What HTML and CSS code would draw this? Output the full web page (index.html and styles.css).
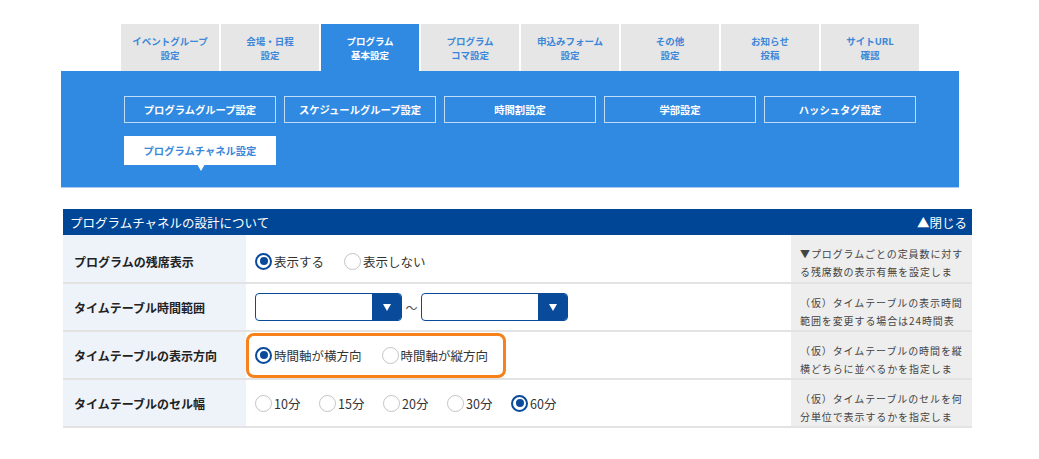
FILE: index.html
```html
<!DOCTYPE html>
<html lang="ja">
<head>
    <meta charset="UTF-8">
    <meta name="viewport" content="width=device-width, initial-scale=1.0">
    <title>プログラム基本設定</title>
    <link rel="stylesheet" href="styles.css">
</head>
<body>

    <div class="page">
        <ul class="tabs">
            <li class="tab">イベントグループ<br>設定</li>
            <li class="tab">会場・日程<br>設定</li>
            <li class="tab active">プログラム<br>基本設定</li>
            <li class="tab">プログラム<br>コマ設定</li>
            <li class="tab">申込みフォーム<br>設定</li>
            <li class="tab">その他<br>設定</li>
            <li class="tab">お知らせ<br>投稿</li>
            <li class="tab">サイトURL<br>確認</li>
        </ul>

        <div class="subnav">
            <a class="sub-btn">プログラムグループ設定</a>
            <a class="sub-btn">スケジュールグループ設定</a>
            <a class="sub-btn">時間割設定</a>
            <a class="sub-btn">学部設定</a>
            <a class="sub-btn">ハッシュタグ設定</a>
            <a class="sub-btn current">プログラムチャネル設定</a>
        </div>

        <div class="settings">
            <div class="settings-head">
                <span>プログラムチャネルの設計について</span>
                <span class="toggle">▲閉じる</span>
            </div>

            <div class="row first">
                <div class="label">プログラムの残席表示</div>
                <div class="field">
                    <label class="option"><span class="radio checked"></span>表示する</label>
                    <label class="option"><span class="radio"></span>表示しない</label>
                </div>
                <div class="note">▼プログラムごとの定員数に対する残席数の表示有無を設定します。</div>
            </div>

            <div class="row">
                <div class="label">タイムテーブル時間範囲</div>
                <div class="field">
                    <div class="select"><span class="select-arrow"></span></div>
                    <span class="range-sep">～</span>
                    <div class="select"><span class="select-arrow"></span></div>
                </div>
                <div class="note">（仮）タイムテーブルの表示時間範囲を変更する場合は24時間表示で指定します。</div>
            </div>

            <div class="row">
                <div class="label">タイムテーブルの表示方向</div>
                <div class="field">
                    <div class="highlight">
                        <label class="option"><span class="radio checked"></span>時間軸が横方向</label>
                        <label class="option"><span class="radio"></span>時間軸が縦方向</label>
                    </div>
                </div>
                <div class="note">（仮）タイムテーブルの時間を縦横どちらに並べるかを指定します。</div>
            </div>

            <div class="row">
                <div class="label">タイムテーブルのセル幅</div>
                <div class="field">
                    <label class="option short"><span class="radio"></span>10分</label>
                    <label class="option short"><span class="radio"></span>15分</label>
                    <label class="option short"><span class="radio"></span>20分</label>
                    <label class="option short"><span class="radio"></span>30分</label>
                    <label class="option short"><span class="radio checked"></span>60分</label>
                </div>
                <div class="note">（仮）タイムテーブルのセルを何分単位で表示するかを指定します。指定した時間幅でプログラムを配置します。</div>
            </div>
        </div>
    </div>

</body>
</html>
```

FILE: styles.css
```css
body {
    margin: 0;
    font-family: "Noto Sans CJK JP", "Noto Sans", sans-serif;
    color: #333;
    background: #fff;
}

.page {
    padding: 24px 0 0 61px;
}

.tabs {
    display: flex;
    gap: 2px;
    margin: 0 0 0 60px;
    padding: 0;
    list-style: none;
}

.tab {
    width: 98px;
    height: 47px;
    display: flex;
    align-items: center;
    justify-content: center;
    text-align: center;
    background: #e6e6e6;
    color: #3b87d8;
    font-size: 9.5px;
    font-weight: bold;
    line-height: 14px;
}

.tab.active {
    background: #318ae2;
    color: #fff;
}

.subnav {
    width: 898px;
    box-sizing: border-box;
    padding: 25px 0 22px 63px;
    background: #318ae2;
    border-bottom: 1px solid #a9cdf2;
    display: flex;
    flex-wrap: wrap;
    gap: 13px 8px;
}

.sub-btn {
    width: 152px;
    height: 27px;
    box-sizing: border-box;
    display: flex;
    align-items: center;
    justify-content: center;
    border: 1px solid rgba(255, 255, 255, 0.7);
    color: #fff;
    font-size: 10.3px;
    font-weight: bold;
}

.sub-btn.current {
    height: 29px;
    background: #fff;
    color: #3b87d8;
    position: relative;
}

.sub-btn.current::after {
    content: "";
    position: absolute;
    left: 72px;
    bottom: -7px;
    border-left: 4px solid transparent;
    border-right: 4px solid transparent;
    border-top: 7px solid #fff;
}

.settings {
    width: 909px;
    margin: 21px 0 0 2px;
}

.settings-head {
    height: 26px;
    display: flex;
    align-items: center;
    justify-content: space-between;
    padding: 0 5px 0 7px;
    background: #004696;
    color: #fff;
    font-size: 12.5px;
}

.row {
    display: grid;
    grid-template-columns: 183px 545px 181px;
    height: 46px;
    border-bottom: 2px solid #e3e3e3;
}

.row.first {
    height: 47px;
}

.label {
    display: flex;
    align-items: center;
    padding-left: 11px;
    background: #eef3fa;
    color: #222;
    font-size: 12px;
    font-weight: bold;
}

.field {
    display: flex;
    align-items: center;
    padding-left: 9px;
    font-size: 12.5px;
}

.row.first .label,
.row.first .field {
    padding-top: 5px;
}

.option {
    display: flex;
    align-items: center;
    flex-shrink: 0;
    gap: 2px;
    margin-right: 20px;
    white-space: nowrap;
}

.option.short {
    width: 45px;
    margin-right: 19px;
}

.radio {
    width: 17px;
    height: 17px;
    box-sizing: border-box;
    border: 1.5px solid #c4c4c4;
    border-radius: 50%;
    position: relative;
    flex-shrink: 0;
}

.radio.checked {
    border: 2px solid #0a4a9b;
}

.radio.checked::after {
    content: "";
    position: absolute;
    top: 2.5px;
    left: 2.5px;
    width: 8px;
    height: 8px;
    border-radius: 50%;
    background: #0a4a9b;
}

.select {
    width: 147px;
    height: 28px;
    box-sizing: border-box;
    border: 1px solid #0a4a9b;
    border-radius: 4px;
    display: flex;
    justify-content: flex-end;
    overflow: hidden;
}

.select-arrow {
    width: 29px;
    background: #0a4a9b;
    display: flex;
    align-items: center;
    justify-content: center;
}

.select-arrow::after {
    content: "";
    border-left: 4px solid transparent;
    border-right: 4px solid transparent;
    border-top: 7px solid #fff;
}

.range-sep {
    width: 19px;
    text-align: center;
    color: #555;
    font-size: 12px;
}

.highlight {
    display: flex;
    align-items: center;
    height: 45px;
    box-sizing: border-box;
    margin-left: -9px;
    padding: 0 15px 0 6px;
    border: 3px solid #f7821b;
    border-radius: 8px;
}

.highlight .option:last-child {
    margin-right: 0;
}

.note {
    overflow: hidden;
    box-sizing: border-box;
    padding: 10px 7px 0 9px;
    background: #eeeeee;
    color: #444;
    font-size: 10px;
    letter-spacing: 0.9px;
    line-height: 18px;
}
```
